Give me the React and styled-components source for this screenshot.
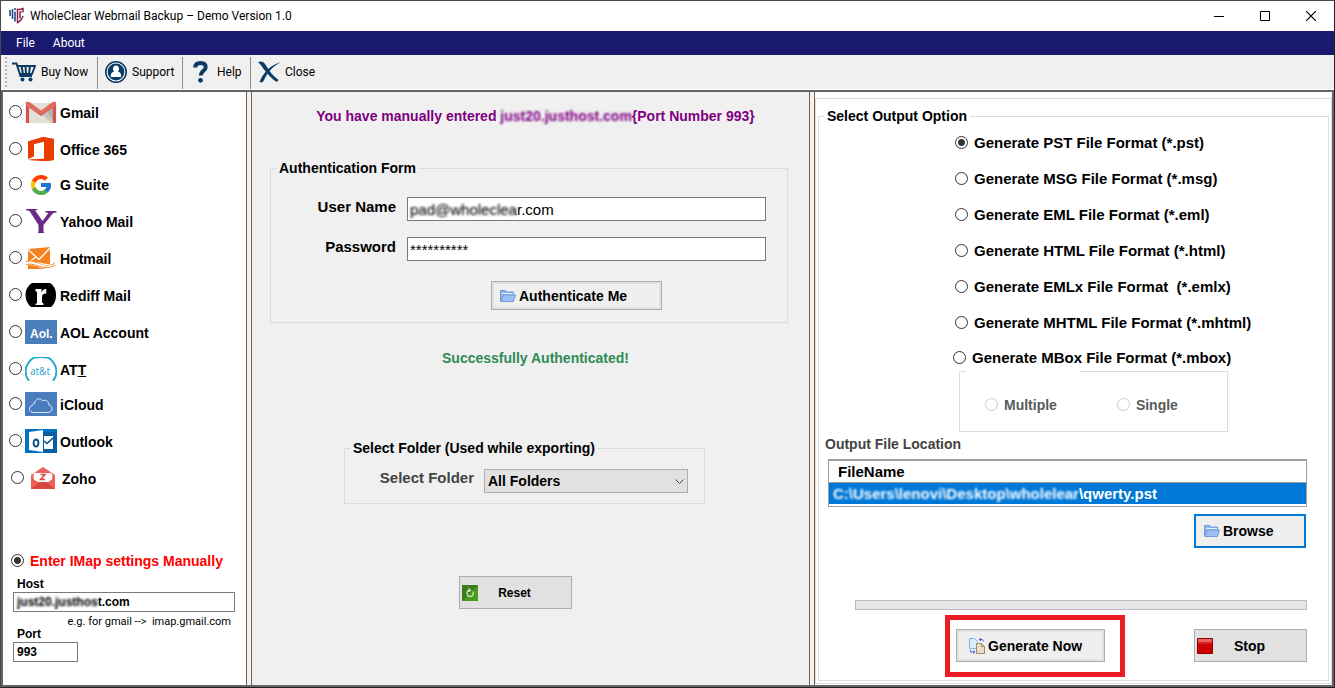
import React, { useState } from "react";
import styled, { createGlobalStyle, css } from "styled-components";
import { FcGoogle } from "react-icons/fc";

const UI = 'Roboto, "Open Sans", sans-serif';
const SANS = '"Liberation Sans", Arial, sans-serif';
const NAVY = "#0b3a63";

const GlobalStyle = createGlobalStyle`
  *, *::before, *::after { box-sizing: border-box; }
  body { margin: 0; font-family: ${SANS}; color: #000; }
  button, input, select { font-family: inherit; color: inherit; margin: 0; }
`;

/* ---------- window chrome ---------- */
const Window = styled.div`
  display: flex;
  flex-direction: column;
  min-height: 100vh;
  border: 1px solid #4a4a4a;
  border-right-color: #222;
  border-bottom-color: #222;
  background: #fff;
`;
const TitleBar = styled.header`
  display: flex;
  align-items: center;
  height: 30px;
  padding-left: 8px;
  font: 12px/16px ${UI};
`;
const Title = styled.h1`
  flex: 1;
  margin: 0 0 0 5px;
  font: inherit;
`;
const CaptionButton = styled.button`
  display: grid;
  place-items: center;
  width: 46px;
  height: 29px;
  padding: 0;
  border: 0;
  background: none;
`;
const MenuBar = styled.nav`
  display: flex;
  align-items: center;
  gap: 18px;
  height: 24px;
  padding-left: 15px;
  background: #191970;
`;
const MenuItem = styled.button`
  padding: 0;
  border: 0;
  background: none;
  color: #fff;
  font: 12px/16px ${UI};
`;
const ToolBar = styled.div`
  display: flex;
  height: 35px;
  padding: 2px 0 0 4px;
  background: #f0f0f0;
  border-bottom: 1px solid #fff;
`;
const Grip = styled.span`
  width: 2px;
  height: 31px;
  background: repeating-linear-gradient(#b4b4b4 0 2px, #f0f0f0 2px 4px);
`;
const ToolButton = styled.button`
  display: flex;
  align-items: center;
  gap: ${(p) => p.$gap || 5}px;
  width: ${(p) => p.$width}px;
  padding: 0 0 2px ${(p) => p.$pad || 7}px;
  border: 0;
  border-right: ${(p) => (p.$last ? "0" : "1px solid #8c8c8c")};
  background: none;
  font: 12px/16px ${UI};
  white-space: nowrap;
`;

/* ---------- body panes ---------- */
const Panes = styled.main`
  flex: 1;
  display: grid;
  grid-template-columns: 243px 6px minmax(530px, 557fr) 6px minmax(490px, 517fr);
  border: 2px solid #646464;
  font-size: 14px;
  line-height: 18px;
  font-weight: bold;
`;
const Splitter = styled.div`
  border: 1px solid #646464;
  border-width: 0 1px;
  background: #faf0e6;
`;
const Pane = styled.section`
  display: flex;
  flex-direction: column;
  background: ${(p) => (p.$shaded ? "#f0f0f0" : "#fff")};
`;

const Radio = styled.input.attrs({ type: "radio" })`
  appearance: none;
  flex: none;
  width: 13px;
  height: 13px;
  margin-bottom: 2px;
  border: 1px solid #333;
  border-radius: 50%;
  background: #fff;
  &:checked {
    background: radial-gradient(circle, #333 0 3px, #fff 4px);
  }
  &:disabled {
    border-color: #ccc;
  }
`;
const inputBox = css`
  border: 1px solid #7a7a7a;
  border-radius: 0;
  background: #fff;
  outline: 0;
`;

/* ---------- left pane ---------- */
const Providers = styled.div`
  display: flex;
  flex-direction: column;
  padding: 8px 0 0 6px;
`;
const Provider = styled.label`
  display: flex;
  align-items: center;
  gap: 3px;
  height: 24px;
  margin-bottom: ${(p) => (p.$tight ? 11 : 13)}px;
  padding-left: ${(p) => (p.$indent ? 2 : 0)}px;
`;
const ProviderName = styled.span`
  padding-top: 2px;
`;
const Manual = styled.label`
  display: flex;
  align-items: center;
  gap: 6px;
  margin: 48px 0 0 8px;
  height: 20px;
  color: #f00;
`;
const Settings = styled.div`
  display: flex;
  flex-direction: column;
  align-items: flex-start;
  padding: 5px 11px 0 10px;
  font-size: 12px;
  line-height: 16px;
`;
const FieldLabel = styled.label`
  padding-left: 4px;
`;
const SmallInput = styled.input`
  ${inputBox}
  width: ${(p) => p.$width || "100%"};
  height: 20px;
  padding: 0 3px;
  font-size: 12px;
  font-weight: bold;
`;
const Hint = styled.p`
  align-self: flex-end;
  margin: 2px 4px -4px 0;
  font: 11px/16px ${UI};
  white-space: pre;
`;
const Masked = styled.div`
  position: relative;
  display: flex;
  width: 100%;
`;
const Veil = styled.span`
  position: absolute;
  inset: 2px auto 2px 2px;
  width: ${(p) => p.$width}px;
  backdrop-filter: blur(1px);
  pointer-events: none;
`;
const Blurred = styled.span`
  filter: blur(1px);
`;

/* ---------- shared controls ---------- */
const Group = styled.fieldset`
  min-width: 0;
  margin: 0;
  padding: 0;
  border: 1px solid #dcdcdc;
`;
const Legend = styled.legend`
  margin-left: 5px;
  padding: 0 3px;
  height: 18px;
`;
const PushButton = styled.button`
  display: flex;
  align-items: center;
  gap: 3px;
  width: ${(p) => p.$width}px;
  height: ${(p) => p.$height || 33}px;
  padding: 0 2px;
  border: 1px solid #adadad;
  background: #e1e1e1;
  font-size: ${(p) => (p.$small ? 12 : 14)}px;
  font-weight: bold;
  line-height: 18px;
  ${(p) => p.$raised && `padding: 0 ${p.$inset || 8}px; background: #efefef; box-shadow: inset 0 0 0 2px #e1e1e1;`}
  ${(p) => p.$focused && "padding: 0 8px; background: #efefef; border: 2px solid #0078d7;"}
`;
const ButtonText = styled.span`
  flex: ${(p) => (p.$centered ? 1 : "none")};
  padding-right: ${(p) => (p.$centered ? 21 : 0)}px;
  text-align: center;
`;

/* ---------- centre pane ---------- */
const Notice = styled.p`
  margin: ${(p) => p.$top}px 0 0 10px;
  text-align: center;
  color: ${(p) => p.$color};
`;
const AuthGroup = styled(Group)`
  margin: 34px 21px 0 18px;
`;
const AuthForm = styled.div`
  display: grid;
  grid-template-columns: 126px 1fr;
  column-gap: 10px;
  row-gap: 16px;
  padding: 20px 21px 12px 0;
`;
const AuthLabel = styled.label`
  padding: 1px 1px 0 0;
  font-size: 15px;
  text-align: right;
`;
const AuthInput = styled.input`
  ${inputBox}
  width: 100%;
  height: 24px;
  padding: 0 2px;
  font-size: 15px;
`;
const AuthAction = styled.div`
  grid-column: 2;
  display: flex;
  padding: 4px 0 0 84px;
`;
const FolderGroup = styled(Group)`
  align-self: center;
  width: 361px;
  margin: 72px 12px 0 0;
`;
const FolderRow = styled.div`
  display: flex;
  gap: 10px;
  justify-content: flex-end;
  padding: 12px 16px 10px 0;
  color: #444;
  font-size: 15px;
`;
const Select = styled.select`
  appearance: none;
  width: 204px;
  height: 24px;
  padding: 0 3px;
  border: 1px solid #adadad;
  border-radius: 0;
  background: #e1e1e1;
  color: #000;
  font-size: 14px;
  font-weight: bold;
`;
const SelectWrap = styled.span`
  position: relative;
  display: flex;
`;
const Chevron = styled.svg`
  position: absolute;
  right: 4px;
  top: 10px;
  pointer-events: none;
`;
const ResetRow = styled.div`
  display: flex;
  justify-content: center;
  padding: 72px 30px 20px 0;
`;

/* ---------- right pane ---------- */
const OuterGroup = styled.div`
  flex: 1;
  display: flex;
  margin: 6px 0 1px;
  padding: 8px 2px 2px;
  border: 1px solid #dcdcdc;
`;
const OutputGroup = styled(Group)`
  flex: 1;
  padding: 0 21px 2px 6px;
`;
const OutputLegend = styled(Legend)`
  margin-left: -1px;
`;
const Formats = styled.div`
  display: flex;
  flex-direction: column;
  gap: 18px;
  padding: 9px 0 0 130px;
`;
const Format = styled.label`
  display: flex;
  align-items: center;
  gap: 6px;
  height: 18px;
  font-size: 15px;
  white-space: pre;
  margin: ${(p) => (p.$outdent ? "-1px 0 0 -2px" : 0)};
`;
const MboxModes = styled.fieldset`
  width: 269px;
  height: 61px;
  margin: 4px 0 0 134px;
  padding: 0;
  border: 1px solid #dcdcdc;
`;
const MboxGap = styled.legend`
  width: 113px;
  height: 1px;
  margin-left: 6px;
  padding: 0;
`;
const ModeRow = styled.div`
  display: flex;
  gap: 60px;
  padding: 24px 0 0 25px;
`;
const Mode = styled.label`
  display: flex;
  align-items: center;
  gap: 6px;
  height: 18px;
  color: #5a5a5a;
`;
const Caption = styled.div`
  margin-top: 3px;
  color: #444;
`;
const FileTable = styled.table`
  width: calc(100% - 3px);
  margin: 6px 0 0 3px;
  border: 1px solid #a0a0a0;
  border-top-width: 2px;
  border-spacing: 0;
  font-size: 15px;
  th, td {
    padding: 0 4px;
    text-align: left;
    white-space: nowrap;
  }
  th {
    height: 22px;
    padding-left: 9px;
    border-bottom: 1px solid #a0a0a0;
  }
  td {
    height: 23px;
    border-bottom: 2px solid #fff;
    background: #0078d7;
    background-clip: padding-box;
    color: #fff;
  }
`;
const BrowseRow = styled.div`
  display: flex;
  justify-content: flex-end;
  padding: 7px 1px 0 0;
`;
const Progress = styled.div`
  height: 10px;
  margin: 52px 0 0 30px;
  border: 1px solid #bcbcbc;
  background: #e6e6e6;
`;
const Actions = styled.div`
  display: flex;
  justify-content: flex-end;
  align-items: flex-start;
  gap: 69px;
  margin-top: 5px;
`;
const Highlight = styled.div`
  width: 180px;
  padding: 9px 6px 10px;
  border: 5px solid #eb1c24;
`;
const StopSlot = styled.div`
  padding-top: 14px;
`;

/* ---------- drawings ---------- */
const AppLogo = () => (
  <svg width="16" height="18" viewBox="0 0 16 18">
    <path d="M1 3v6M3.500 2v10M6 4.500v10M5 2h2" stroke="#1f3f7a" strokeWidth="1.500" fill="none" />
    <path d="M8.500 1.500v15M8 2.500h3l3-1v4M8 15.800c3-1.500 5-3.500 6-6.800M11 5v6.500M10.500 5h2" stroke="#8c2348" strokeWidth="1.500" fill="none" />
  </svg>
);
const Cart = () => (
  <svg width="24" height="20" viewBox="0 0 24 20" fill="none" stroke={NAVY}>
    <path d="M0 1.500h4.500l4 12.500h11.500" strokeWidth="2" />
    <path d="M5.500 4h17.500l-3 8H8" strokeWidth="1.800" />
    <path d="M9.500 4l1.500 8M13.500 4l.5 8M18 4l-1 8" strokeWidth="2" />
    <circle cx="10.500" cy="17.500" r="2" fill={NAVY} stroke="none" />
    <circle cx="18.500" cy="17.500" r="2" fill={NAVY} stroke="none" />
  </svg>
);
const SupportIcon = () => (
  <svg width="22" height="22" viewBox="0 0 22 22">
    <circle cx="11" cy="11" r="10.200" fill="#fff" stroke={NAVY} strokeWidth="1.600" />
    <circle cx="11" cy="11" r="8.400" fill={NAVY} />
    <path d="M11 4.500c2 0 3 1.400 3 3.200 0 1.300-.5 2.300-1.200 2.900 2.200.5 3.400 1.500 3.400 5.400H5.800c0-3.900 1.200-4.900 3.400-5.400C8.500 10 8 9 8 7.700c0-1.800 1-3.200 3-3.200z" fill="#fff" />
  </svg>
);
const HelpIcon = () => (
  <svg width="15" height="22" viewBox="0 0 15 22">
    <path d="M2.200 6.500C2.300 3.500 4.300 2 7.500 2s5.200 1.600 5.200 4.200c0 3.600-5 3.800-5 8.300" fill="none" stroke={NAVY} strokeWidth="4" />
    <circle cx="7.500" cy="19.300" r="2.400" fill={NAVY} />
  </svg>
);
const CloseIcon = () => (
  <svg width="24" height="22" viewBox="0 0 24 22" fill={NAVY}>
    <path d="M0 1.500C3-.5 6 1 8 4.500c3.500 6 7.500 11 12.500 14.500-1 2-2.500 2-4 .5C11 15 6.500 9.500 3.500 5 2.500 3.500 1.500 2 0 1.500z" />
    <path d="M23.500 1C16 4 10 10.500 6 19c-1 2.500-3 3-4.500 2C5 12 12.500 3.500 23.500 1z" />
  </svg>
);
const Gmail = () => (
  <svg width="32" height="24" viewBox="0 0 32 24">
    <path d="M2 3h28v20H2z" fill="#e4e2d8" />
    <path d="M16 13 30 3v20h-4z" fill="#c8c7be" />
    <path d="M21 9.500 30 23V6z" fill="#a9a8a2" opacity=".7" />
    <path d="M2.500 23V4.500L16 14 29.500 4.500V23" fill="none" stroke="#d5534a" strokeWidth="3.200" />
    <path d="M1 3.500Q2 1 4.500 2L16 10.500 27.500 2Q30 1 31 3.500l-1 3L16 15 2 6.500z" fill="#e06a60" />
  </svg>
);
const Office = () => (
  <svg width="32" height="24" viewBox="0 0 32 24">
    <path d="M3 4.500 18 0l11 2v21l-7 1-19-1 6-1.500V6.500L3 8z" fill="#eb3c00" />
    <path d="M3 4.500V22l6-2.500V7l10-2.500V22L4 23l15 1 10-1V2L18 0z" fill="#eb3c00" />
    <path d="M9 7.200 19 4.800v17L5 22.300 9 19.500z" fill="#fff" />
  </svg>
);
const GSuite = () => (
  <svg width="32" height="24" viewBox="0 0 32 24">
    <FcGoogle x="4" y="1" size={24} />
  </svg>
);
const Yahoo = () => (
  <svg width="32" height="24" viewBox="0 0 32 24">
    <path d="M1 0h11.500l-.3 1-2 .6L17.500 12l5.800-8-2.800-.8V2h11v1.200l-3.500 1L18.500 16v6.800l1 1.200h-7l1-1.200V16L4.500 2 1 .9z" fill="#6b2a86" />
  </svg>
);
const Hotmail = () => (
  <svg width="32" height="24" viewBox="0 0 32 24">
    <path d="M3 3 25 1v17c-6 1-12-4-22-1z" fill="#f58220" />
    <path d="M3 3.500l11 10L25 2M3 17l8-6" fill="none" stroke="#fff" strokeWidth="1.300" />
    <path d="M3 19c8-1 13 5 22 4H3z" fill="#f58220" />
    <path d="M1 15.500c8-3 14 5 22 4 3-.4 6-1.500 7-3M1 18.500c8-2 14 4 22 3 3-.4 6-1.500 7-2.500" fill="none" stroke="#f58220" strokeWidth="1" />
    <path d="M2 16.800c8-2.500 14 4.400 21 3.500l3-.8" fill="none" stroke="#fff" strokeWidth="1.200" />
  </svg>
);
const Rediff = () => (
  <svg width="32" height="24" viewBox="0 0 32 24">
    <path d="M7 0h18c5 3.500 6 8 6 12s-1 8.500-5 12H6c-4-3.500-5.500-8-5.500-12S2 3.500 7 0z" fill="#000" />
    <path d="M10.500 6h6v3.500c1-2.600 2.500-3.800 4.800-3.500v4.500c-3 0-4.300 1-4.300 3.500v5.500l1.500 1v1.500h-8V21l1.500-1V9l-1.500-1z" fill="#fff" />
  </svg>
);
const Aol = () => (
  <svg width="32" height="24" viewBox="0 0 32 24">
    <path d="M0 0h32v24H0z" fill="#4a7ebb" />
    <text x="5" y="18" fill="#fff" fontFamily={SANS} fontWeight="bold" fontSize="12">Aol.</text>
  </svg>
);
const Att = () => (
  <svg width="32" height="24" viewBox="0 0 32 24">
    <path d="M4 24C-1 18-1 8 8 1Q16-1 24 1C33 8 33 18 28 24" fill="none" stroke="#1fa6d0" strokeWidth="1.800" />
    <text x="5" y="18" fill="#1fa6d0" fontFamily='"Open Sans", sans-serif' fontWeight="400" fontSize="10">at&amp;t</text>
  </svg>
);
const ICloud = () => (
  <svg width="32" height="24" viewBox="0 0 32 24">
    <path d="M0 0h32v24H0z" fill="#4a7cc0" />
    <path d="M9 20.500h14c5 0 5.500-6.500 1-7.300 0-4-3.600-6-6.500-4.300C15 5 9.500 7 10 11.200c-2 0-2.600 1.200-2.500 2.200-4.500 1-4 7.100 1.500 7.100z" fill="none" stroke="#dfe9f6" strokeWidth="1" />
  </svg>
);
const Outlook = () => (
  <svg width="32" height="24" viewBox="0 0 32 24">
    <path d="M0 0h32v24H0z" fill="#0072c6" />
    <path d="M18 3h14v21H18z" fill="#0a5ea6" />
    <path d="M4 3 18 1v22L4 21z" fill="#fff" />
    <path d="M19 7h9v13h-9z" fill="#fff" />
    <path d="M19 12l3 2.500L28 9" fill="none" stroke="#0a4f8c" strokeWidth="1.600" />
    <ellipse cx="11" cy="14" rx="2.400" ry="3.500" fill="none" stroke="#0a4f8c" strokeWidth="1.900" />
  </svg>
);
const Zoho = () => (
  <svg width="32" height="24" viewBox="0 0 32 24">
    <path d="M4 9 16 1l12 8v14H4z" fill="#e9605c" />
    <path d="M9 7h14q2.500 0 2.500 3.500T23 16H9q-2.500-1-2.500-5.500T9 7z" fill="#fff" />
    <path d="M4 12l7 4h10l7-4v11H4z" fill="#ee5f5b" />
    <path d="M4 23l9-7h6l9 7z" fill="#d9453f" />
    <path d="M13.500 8.500h4.500l-4.500 5H18" fill="none" stroke="#d9453f" strokeWidth="1.500" />
  </svg>
);
const Folder = () => (
  <svg width="16" height="14" viewBox="0 0 16 14">
    <path d="M.5 1.500h5l1 1.500h7v9H.5z" fill="#8cb4e8" stroke="#6c98d8" />
    <path d="M2 4h11v1H2z" fill="#e8f2fd" />
    <path d="M1 12.500 3.500 6h12l-2 6.500z" fill="#9dc0f2" stroke="#6f9ce0" />
  </svg>
);
const Refresh = () => (
  <svg width="16" height="16" viewBox="0 0 16 16">
    <path d="M0 0h16v16H0z" fill="#4a9a1c" />
    <path d="M0 0h16L0 16z" fill="#3d7a20" />
    <path d="M10.800 6.500A3.200 3.200 0 1 1 7 5.300M6.500 3.500l2 2-2.500 1.200" fill="none" stroke="#d8f0c8" strokeWidth="1.200" />
  </svg>
);
const StopIcon = () => (
  <svg width="16" height="16" viewBox="0 0 16 16">
    <path d="M.5.5h15v15H.5z" fill="#d00000" stroke="#8c0000" />
    <path d="M1 1h14v3H1z" fill="#e86060" />
    <path d="M1 4h14v2H1z" fill="#d82020" />
  </svg>
);
const Convert = () => (
  <svg width="16" height="16" viewBox="0 0 16 16">
    <path d="M.5.500h5l3 3v7h-8z" fill="#d8eefa" stroke="#8ab4d0" />
    <path d="M7.500 5.500h5l3 3v7h-8z" fill="#eadcc8" stroke="#a08c70" />
    <path d="M12.500 5.500V8.500h3" fill="none" stroke="#a08c70" />
    <path d="M10 1.500h3.500l1 2M12 0l-2 1.500 2 1.500M1.500 12v2H5M4 12.500l2 1.500-2 1.500" fill="none" stroke="#5560e0" />
  </svg>
);

const PROVIDERS = [
  { name: "Gmail", Icon: Gmail },
  { name: "Office 365", Icon: Office, tight: true },
  { name: "G Suite", Icon: GSuite },
  { name: "Yahoo Mail", Icon: Yahoo },
  { name: "Hotmail", Icon: Hotmail },
  { name: "Rediff Mail", Icon: Rediff },
  { name: "AOL Account", Icon: Aol },
  { name: "ATT", Icon: Att, tight: true, text: <>AT<u>T</u></> },
  { name: "iCloud", Icon: ICloud },
  { name: "Outlook", Icon: Outlook },
  { name: "Zoho", Icon: Zoho, indent: true },
];
const FORMATS = [
  ["pst", "Generate PST File Format (*.pst)"],
  ["msg", "Generate MSG File Format (*.msg)"],
  ["eml", "Generate EML File Format (*.eml)"],
  ["html", "Generate HTML File Format (*.html)"],
  ["emlx", "Generate EMLx File Format  (*.emlx)"],
  ["mhtml", "Generate MHTML File Format (*.mhtml)"],
  ["mbox", "Generate MBox File Format (*.mbox)"],
];

export default function App() {
  const [source, setSource] = useState("manual");
  const [format, setFormat] = useState("pst");
  return (
    <>
      <GlobalStyle />
      <Window>
        <TitleBar>
          <AppLogo />
          <Title>WholeClear Webmail Backup – Demo Version 1.0</Title>
          <CaptionButton aria-label="Minimize">
            <svg width="10" height="10"><path d="M0 5.500h10" stroke="#000" /></svg>
          </CaptionButton>
          <CaptionButton aria-label="Maximize">
            <svg width="10" height="10"><path d="M.5.5h9v9h-9z" fill="none" stroke="#000" /></svg>
          </CaptionButton>
          <CaptionButton aria-label="Close window">
            <svg width="10" height="10"><path d="M0 0l10 10M10 0L0 10" stroke="#000" strokeWidth="1.200" /></svg>
          </CaptionButton>
        </TitleBar>
        <MenuBar>
          <MenuItem>File</MenuItem>
          <MenuItem>About</MenuItem>
        </MenuBar>
        <ToolBar>
          <Grip />
          <ToolButton $width={91} $pad={5}><Cart />Buy Now</ToolButton>
          <ToolButton $width={85}><SupportIcon />Support</ToolButton>
          <ToolButton $width={68} $pad={10} $gap={9}><HelpIcon />Help</ToolButton>
          <ToolButton $width={72} $gap={3} $last><CloseIcon />Close</ToolButton>
        </ToolBar>

        <Panes>
          <Pane>
            <Providers>
              {PROVIDERS.map(({ name, Icon, tight, indent, text }) => (
                <Provider key={name} $tight={tight} $indent={indent}>
                  <Radio name="source" checked={source === name} onChange={() => setSource(name)} />
                  <Icon />
                  <ProviderName>{text || name}</ProviderName>
                </Provider>
              ))}
            </Providers>
            <Manual>
              <Radio name="source" checked={source === "manual"} onChange={() => setSource("manual")} />
              Enter IMap settings Manually
            </Manual>
            <Settings>
              <FieldLabel htmlFor="host">Host</FieldLabel>
              <Masked>
                <SmallInput id="host" defaultValue="just20.justhost.com" />
                <Veil $width={84} />
              </Masked>
              <Hint>{"e.g. for gmail -->  imap.gmail.com"}</Hint>
              <FieldLabel htmlFor="port">Port</FieldLabel>
              <SmallInput id="port" $width="65px" defaultValue="993" />
            </Settings>
          </Pane>
          <Splitter />

          <Pane $shaded>
            <Notice $top={15} $color="#800080">
              You have manually entered <Blurred>just20.justhost.com</Blurred>
              {"{Port Number 993}"}
            </Notice>
            <AuthGroup>
              <Legend>Authentication Form</Legend>
              <AuthForm>
                <AuthLabel htmlFor="user">User Name</AuthLabel>
                <Masked>
                  <AuthInput id="user" defaultValue="pad@wholeclear.com" />
                  <Veil $width={108} />
                </Masked>
                <AuthLabel htmlFor="password">Password</AuthLabel>
                <AuthInput id="password" defaultValue="**********" />
                <AuthAction>
                  <PushButton $width={171} $height={29} $raised>
                    <Folder />
                    <ButtonText>Authenticate Me</ButtonText>
                  </PushButton>
                </AuthAction>
              </AuthForm>
            </AuthGroup>
            <Notice $top={26} $color="#2e8b57">Successfully Authenticated!</Notice>
            <FolderGroup>
              <Legend>Select Folder (Used while exporting)</Legend>
              <FolderRow>
                <label htmlFor="folder">Select Folder</label>
                <SelectWrap>
                  <Select id="folder" defaultValue="All Folders">
                    <option>All Folders</option>
                  </Select>
                  <Chevron width="9" height="6" viewBox="0 0 9 6">
                    <path d="M.5.5l4 4 4-4" fill="none" stroke="#444" />
                  </Chevron>
                </SelectWrap>
              </FolderRow>
            </FolderGroup>
            <ResetRow>
              <PushButton $width={113} $small>
                <Refresh />
                <ButtonText $centered>Reset</ButtonText>
              </PushButton>
            </ResetRow>
          </Pane>
          <Splitter />

          <Pane>
            <OuterGroup>
              <OutputGroup>
                <OutputLegend>Select Output Option</OutputLegend>
                <Formats>
                  {FORMATS.map(([id, text]) => (
                    <Format key={id} $outdent={id === "mbox"}>
                      <Radio name="format" checked={format === id} onChange={() => setFormat(id)} />
                      {text}
                    </Format>
                  ))}
                </Formats>
                <MboxModes disabled aria-label="MBox mode">
                  <MboxGap />
                  <ModeRow>
                    <Mode><Radio name="mode" />Multiple</Mode>
                    <Mode><Radio name="mode" />Single</Mode>
                  </ModeRow>
                </MboxModes>
                <Caption>Output File Location</Caption>
                <FileTable>
                  <thead>
                    <tr><th scope="col">FileName</th></tr>
                  </thead>
                  <tbody>
                    <tr><td><Blurred>C:\Users\lenovi\Desktop\wholelear</Blurred>\qwerty.pst</td></tr>
                  </tbody>
                </FileTable>
                <BrowseRow>
                  <PushButton $width={112} $height={34} $focused>
                    <Folder />
                    <ButtonText>Browse</ButtonText>
                  </PushButton>
                </BrowseRow>
                <Progress role="progressbar" aria-label="Export progress" aria-valuenow={0} />
                <Actions>
                  <Highlight>
                    <PushButton $width={149} $inset={12} $raised>
                      <Convert />
                      <ButtonText>Generate Now</ButtonText>
                    </PushButton>
                  </Highlight>
                  <StopSlot>
                    <PushButton $width={113}>
                      <StopIcon />
                      <ButtonText $centered>Stop</ButtonText>
                    </PushButton>
                  </StopSlot>
                </Actions>
              </OutputGroup>
            </OuterGroup>
          </Pane>
        </Panes>
      </Window>
    </>
  );
}
